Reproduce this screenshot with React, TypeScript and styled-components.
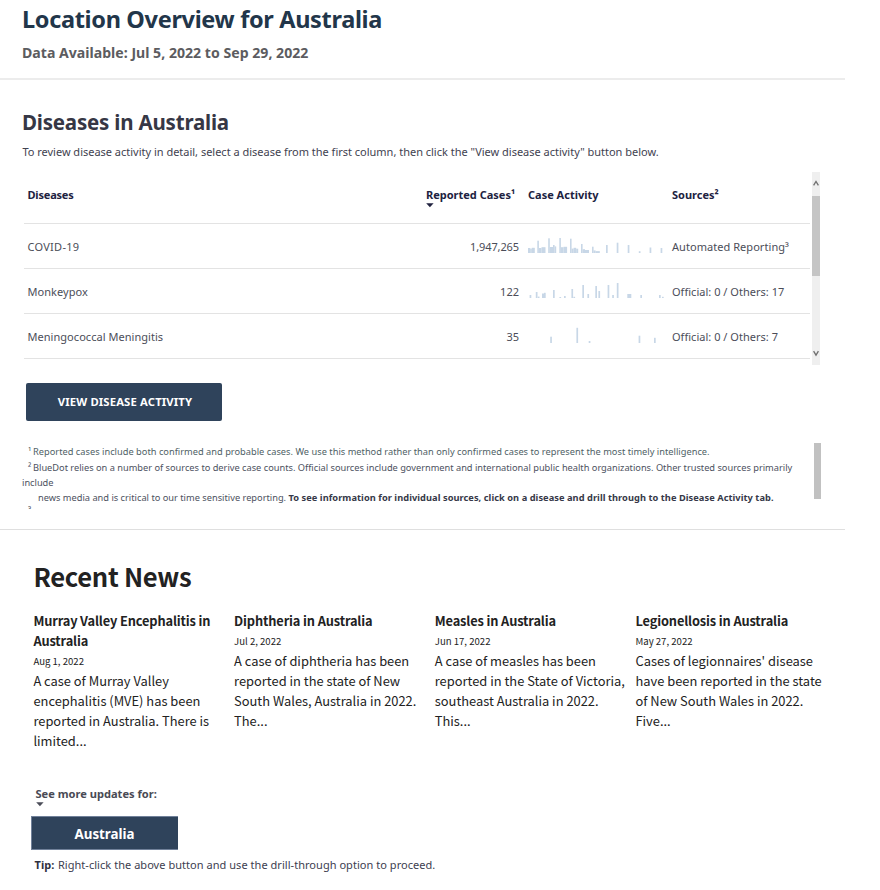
import React from "react";
import styled, { createGlobalStyle } from "styled-components";

const GlobalStyle = createGlobalStyle`
  * { box-sizing: border-box; }
  body {
    margin: 0;
    background: #fff;
    color: #3d4050;
    font-family: "Noto Sans", "Open Sans", sans-serif;
    font-size: 11px;
  }
  h1, h2, h3, p { margin: 0; }
`;

const Page = styled.main`
  width: 880px;
  height: 890px;
  overflow: hidden;
  background: #fff;
`;

const Header = styled.header`
  width: 845px;
  height: 80px;
  padding: 1px 0 0 22px;
  border-bottom: 2px solid #ececec;
`;

const PageTitle = styled.h1`
  font-size: 23.5px;
  line-height: 36px;
  letter-spacing: -0.33px;
  color: #22364a;
`;

const DateRange = styled.p`
  margin-top: 6px;
  font-size: 14.1px;
  font-weight: 700;
  line-height: 20px;
  letter-spacing: 0.01px;
  color: #5c5c60;
`;

const DiseasesSection = styled.section`
  width: 845px;
  height: 450px;
  padding: 28px 0 0 22px;
  border-bottom: 1px solid #dfdfdf;
`;

const SectionTitle = styled.h2`
  font-size: 20.5px;
  line-height: 28px;
  letter-spacing: -0.2px;
  color: #363745;
`;

const Intro = styled.p`
  margin-top: 8px;
  padding-left: 0.4px;
  line-height: 16px;
  letter-spacing: -0.01px;
  color: #3f4250;
`;

const TablePanel = styled.div`
  display: flex;
  justify-content: space-between;
  width: 798px;
  height: 193px;
  margin-top: 12px;
`;

const Table = styled.div`
  width: 786.5px;
  margin-left: 1.5px;
`;

const Row = styled.div<{ $head?: boolean }>`
  display: grid;
  grid-template-columns: 398.5px 102px 144px 1fr;
  align-items: ${(p) => (p.$head ? "start" : "center")};
  height: ${(p) => (p.$head ? 52 : 45)}px;
  padding: ${(p) => (p.$head ? 15 : 1)}px 0 0 4px;
  border-bottom: 1px solid #e3e3e3;
  line-height: 16px;
`;

const HeadCell = styled.div<{ $track?: number }>`
  font-weight: 700;
  letter-spacing: ${(p) => p.$track ?? 0}px;
  color: #20223f;
  white-space: nowrap;
`;

const Cell = styled.div<{ $track?: number; $numeric?: boolean }>`
  letter-spacing: ${(p) => p.$track ?? 0}px;
  text-align: ${(p) => (p.$numeric ? "right" : "left")};
  padding-right: ${(p) => (p.$numeric ? 9 : 0)}px;
  color: #4b4d58;
  white-space: nowrap;
`;

const SparkSvg = styled.svg`
  display: block;
  align-self: start;
  margin-top: 11px;
  fill: #c8d7e7;
`;

const Caret = styled.svg`
  display: block;
  width: 8px;
  height: 5px;
`;

const Scrollbar = styled.div`
  display: flex;
  flex-direction: column;
  align-items: center;
  width: 8px;
  background: #efefef;
`;

const ScrollArrow = styled.svg`
  display: block;
  flex: 0 0 24px;
  width: 8px;
  height: 24px;
  fill: none;
  stroke: #707070;
  stroke-width: 1.3;
`;

const Thumb = styled.div`
  width: 8px;
  height: 80px;
  background: #c5c5c5;
`;

const Spacer = styled.div`
  flex: 1;
`;

const ActivityButton = styled.button`
  display: block;
  width: 196px;
  height: 37.5px;
  margin: 18px 0 0 4px;
  padding: 0 0 0 2px;
  border: 0;
  border-radius: 2px;
  background: #2f435b;
  color: #fff;
  font: 700 11.3px/37px "Noto Sans", sans-serif;
  letter-spacing: 0.14px;
`;

const FootnotePanel = styled.div`
  display: flex;
  justify-content: space-between;
  width: 799px;
  height: 66px;
  margin-top: 22.5px;
  overflow: hidden;
`;

const Footnotes = styled.div`
  width: 785px;
  padding-top: 1.3px;
  font-size: 9.26px;
  line-height: 15.3px;
  color: #4c5160;
`;

const Note = styled.p<{ $indent: number; $track?: number; $tone?: string; $tight?: boolean }>`
  text-indent: ${(p) => p.$indent}px;
  letter-spacing: ${(p) => p.$track ?? 0}px;
  color: ${(p) => p.$tone ?? "inherit"};
  line-height: ${(p) => (p.$tight ? "14px" : "inherit")};
`;

const NoteMark = styled.span`
  display: inline-block;
  width: 5px;
  text-indent: 0;
`;

const NoteStrong = styled.strong`
  letter-spacing: 0.052px;
  color: #363848;
`;

const FootnoteThumb = styled.div`
  width: 7.5px;
  height: 56px;
  background: #c1c1c1;
`;

const NewsSection = styled.section`
  padding: 27.5px 0 0 33.4px;
  height: 255.5px;
  font-family: "Noto Sans CJK SC", "Noto Sans", sans-serif;
  color: #222;
`;

const NewsHeading = styled.h2`
  font-size: 25.6px;
  line-height: 36px;
  letter-spacing: -0.3px;
`;

const NewsGrid = styled.div`
  display: grid;
  grid-template-columns: repeat(4, 192px);
  column-gap: 8.7px;
  margin-top: 17px;
  line-height: 20px;
`;

const NewsTitle = styled.h3`
  font-size: 12.8px;
  letter-spacing: -0.13px;
`;

const NewsDate = styled.p`
  font-size: 9.6px;
`;

const NewsBody = styled.p`
  font-size: 12.88px;
`;

const Updates = styled.section`
  padding-left: 31px;
`;

const UpdatesLabel = styled.p`
  padding-left: 4.5px;
  font-size: 11.1px;
  font-weight: 700;
  line-height: 16px;
  color: #494a54;
`;

const UpdatesCaret = styled.div`
  height: 14.5px;
  padding-left: 4.5px;
`;

const CountryButton = styled.button`
  display: block;
  width: 147px;
  height: 34px;
  padding: 2px 1px 0 0;
  border: 1px solid #71819a;
  border-width: 1px 0 1px 1px;
  background: #2f435b;
  color: #fff;
  font: 700 13.33px/31px "Noto Sans", sans-serif;
`;

const Tip = styled.p`
  margin: 7px 0 0 3.6px;
  line-height: 16px;
  letter-spacing: 0.04px;
`;

const TipLabel = styled.strong`
  margin-right: 0.6px;
  color: #30313f;
`;

type Bar = [x: number, height: number, width?: number];

const BASE = 17;

const covidBars: Bar[] = [
  [0, 5, 2.2], [2.2, 4.4, 1.6], [3.8, 5.2, 3],
  [9.3, 12.3, 1.6], [10.9, 5, 2.6], [13.5, 5.8, 4],
  [20.2, 14.7, 1.6], [21.8, 6, 3.2], [25, 8, 1.6], [26.6, 6.6, 1.6],
  [31.3, 15, 1.6], [32.9, 5.8, 2.6], [35.5, 6.2, 3.6],
  [42, 14.3, 1.6], [43.6, 4.4, 2], [45.6, 5.2, 2.6], [48.2, 4.3, 2],
  [53, 9, 1.6], [54.6, 3.8, 2.4], [57, 3, 4],
  [64, 6.3, 1.6], [65.6, 2.6, 2], [67.6, 1.9, 4.2],
  [78, 8], [88.7, 10.3], [99.7, 8], [110.8, 1.8], [121.6, 5.5], [132.6, 5],
];

const monkeypoxBars: Bar[] = [
  [1.6, 3], [7.8, 6], [9.8, 1.4], [14, 4.5, 2], [16, 5.2], [25, 8], [31.4, 1], [36, 2],
  [43.4, 9], [45.4, 1.2], [54.3, 13], [59.4, 4], [67.3, 12], [70.4, 7], [79.6, 13],
  [84.2, 3], [88.8, 15], [99.3, 4, 4], [112.3, 3], [131, 3], [134, 1.2],
];

const meningitisBars: Bar[] = [[22.2, 6.3], [48.4, 15.2], [60.7, 2], [110.6, 7.3], [126, 5.2]];

function Sparkline({ bars }: { bars: Bar[] }) {
  return (
    <SparkSvg width="138" height="18" viewBox="0 0 138 18">
      {bars.map(([x, h, w = 1.7]) => (
        <rect key={x} x={x} y={BASE - h} width={w} height={h} />
      ))}
    </SparkSvg>
  );
}

function SortCaret({ color }: { color: string }) {
  return (
    <Caret viewBox="0 0 8 5">
      <path d="M0.2 0.3h7.4L3.9 4.3z" fill={color} />
    </Caret>
  );
}

const diseases = [
  { name: "COVID-19", nameTrack: 0.27, cases: "1,947,265", casesTrack: -0.1, bars: covidBars, sources: "Automated Reporting³", sourceTrack: 0.05 },
  { name: "Monkeypox", nameTrack: 0.04, cases: "122", casesTrack: 0, bars: monkeypoxBars, sources: "Official: 0 / Others: 17", sourceTrack: 0.02 },
  { name: "Meningococcal Meningitis", nameTrack: 0.04, cases: "35", casesTrack: 0, bars: meningitisBars, sources: "Official: 0 / Others: 7", sourceTrack: 0.02 },
];

const news = [
  { title: "Murray Valley Encephalitis in Australia", date: "Aug 1, 2022", body: "A case of Murray Valley encephalitis (MVE) has been reported in Australia. There is limited..." },
  { title: "Diphtheria in Australia", date: "Jul 2, 2022", body: "A case of diphtheria has been reported in the state of New South Wales, Australia in 2022. The..." },
  { title: "Measles in Australia", date: "Jun 17, 2022", body: "A case of measles has been reported in the State of Victoria, southeast Australia in 2022. This..." },
  { title: "Legionellosis in Australia", date: "May 27, 2022", body: "Cases of legionnaires' disease have been reported in the state of New South Wales in 2022. Five..." },
];

export default function App() {
  return (
    <Page>
      <GlobalStyle />
      <Header>
        <PageTitle>Location Overview for Australia</PageTitle>
        <DateRange>Data Available: Jul 5, 2022 to Sep 29, 2022</DateRange>
      </Header>

      <DiseasesSection>
        <SectionTitle>Diseases in Australia</SectionTitle>
        <Intro>
          To review disease activity in detail, select a disease from the first column, then click the "View disease
          activity" button below.
        </Intro>
        <TablePanel>
          <Table>
            <Row $head>
              <HeadCell $track={-0.2}>Diseases</HeadCell>
              <HeadCell>
                Reported Cases¹
                <SortCaret color="#20223f" />
              </HeadCell>
              <HeadCell>Case Activity</HeadCell>
              <HeadCell>Sources²</HeadCell>
            </Row>
            {diseases.map((d) => (
              <Row key={d.name}>
                <Cell $track={d.nameTrack}>{d.name}</Cell>
                <Cell $numeric $track={d.casesTrack}>{d.cases}</Cell>
                <Sparkline bars={d.bars} />
                <Cell $track={d.sourceTrack}>{d.sources}</Cell>
              </Row>
            ))}
          </Table>
          <Scrollbar>
            <ScrollArrow viewBox="0 0 8 24">
              <path d="M1.6 13.4L4 9.4l2.4 4" />
            </ScrollArrow>
            <Thumb />
            <Spacer />
            <ScrollArrow viewBox="0 0 8 24">
              <path d="M1.6 10.2L4 14.2l2.4-4" />
            </ScrollArrow>
          </Scrollbar>
        </TablePanel>

        <ActivityButton>VIEW DISEASE ACTIVITY</ActivityButton>

        <FootnotePanel>
          <Footnotes>
            <Note $indent={6} $track={0.012} $tone="#4f5f66">
              <NoteMark>¹</NoteMark>
              Reported cases include both confirmed and probable cases. We use this method rather than only confirmed
              cases to represent the most timely intelligence.
            </Note>
            <Note $indent={6} $track={-0.008}>
              <NoteMark>²</NoteMark>
              BlueDot relies on a number of sources to derive case counts. Official sources include government and
              international public health organizations. Other trusted sources primarily include
            </Note>
            <Note $indent={16}>
              news media and is critical to our time sensitive reporting.{" "}
              <NoteStrong>
                To see information for individual sources, click on a disease and drill through to the Disease Activity
                tab.
              </NoteStrong>
            </Note>
            <Note $indent={6} $tight>³</Note>
          </Footnotes>
          <FootnoteThumb />
        </FootnotePanel>
      </DiseasesSection>

      <NewsSection>
        <NewsHeading>Recent News</NewsHeading>
        <NewsGrid>
          {news.map((n) => (
            <article key={n.title}>
              <NewsTitle>{n.title}</NewsTitle>
              <NewsDate>{n.date}</NewsDate>
              <NewsBody>{n.body}</NewsBody>
            </article>
          ))}
        </NewsGrid>
      </NewsSection>

      <Updates>
        <UpdatesLabel>See more updates for:</UpdatesLabel>
        <UpdatesCaret>
          <SortCaret color="#4b4d58" />
        </UpdatesCaret>
        <CountryButton>Australia</CountryButton>
        <Tip>
          <TipLabel>Tip:</TipLabel> Right-click the above button and use the drill-through option to proceed.
        </Tip>
      </Updates>
    </Page>
  );
}
